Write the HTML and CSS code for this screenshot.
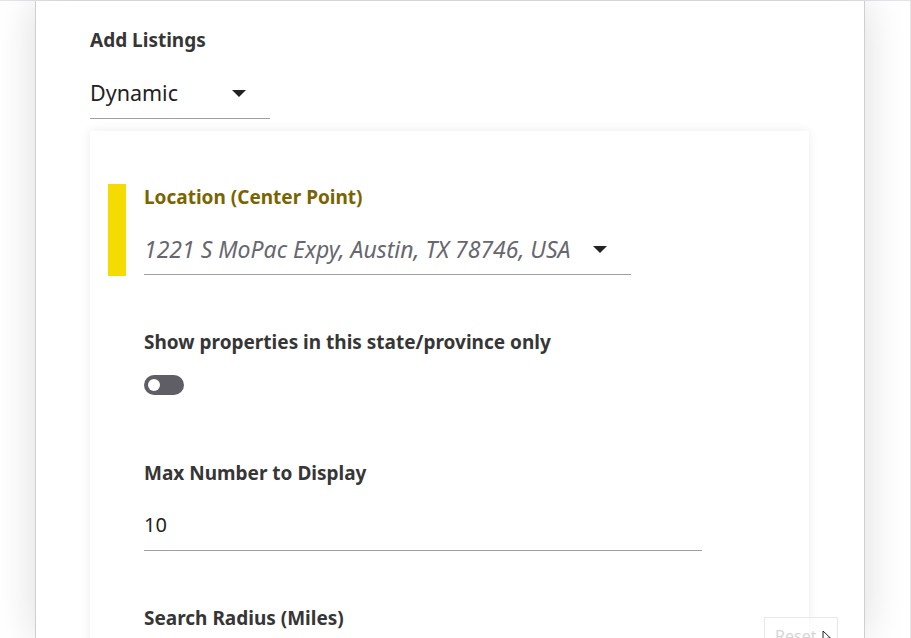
FILE: index.html
```html
<!DOCTYPE html>
<html>
<head>
<meta charset="utf-8">
<link rel="stylesheet" href="styles.css">
</head>
<body>
<div class="wrap">
  <div class="panel">
    <div class="title">Add Listings</div>
    <div class="select select-type">
      <span class="value">Dynamic</span>
      <svg class="caret" width="14" height="7" viewBox="0 0 14 7"><path d="M0 0H14L7 7Z" fill="#222"/></svg>
    </div>
    <div class="card">
      <div class="field field-active">
        <div class="bar"></div>
        <div class="label label-active">Location (Center Point)</div>
        <div class="select select-loc">
          <span class="value value-italic">1221 S MoPac Expy, Austin, TX 78746, USA</span>
          <svg class="caret" width="14" height="7" viewBox="0 0 14 7"><path d="M0 0H14L7 7Z" fill="#222"/></svg>
        </div>
      </div>
      <div class="field field-toggle">
        <div class="label">Show properties in this state/province only</div>
        <div class="toggle"><span class="knob"></span></div>
      </div>
      <div class="field field-max">
        <div class="label">Max Number to Display</div>
        <div class="input input-max"><span class="value-num">10</span></div>
      </div>
      <div class="field field-radius">
        <div class="label">Search Radius (Miles)</div>
      </div>
    </div>
  </div>
</div>
<div class="float-btn"><span>Reset</span></div>
<svg class="cursor" width="10" height="14" viewBox="0 0 10 14"><path d="M1 1V11L3.5 8.8L5.4 13L7 12.3L5.2 8.2H8.6Z" fill="#fff" stroke="#222" stroke-width="1"/></svg>
</body>
</html>
```
FILE: styles.css
```css
html, body {
  margin: 0;
  padding: 0;
  height: 100%;
  overflow: hidden;
  background: #ffffff;
  font-family: "Noto Sans", "Open Sans", sans-serif;
}
.wrap {
  box-sizing: border-box;
  height: 638px;
  border-top: 1px solid #e2e5e9;
  border-right: 1px solid #e4e4e4;
  padding-left: 35px;
  display: flex;
}
.panel {
  box-sizing: border-box;
  width: 830px;
  height: 637px;
  background: #fff;
  border-left: 1px solid #cfcfcf;
  border-right: 1px solid #cfcfcf;
  box-shadow: 0 0 40px rgba(0, 0, 0, 0.14);
  padding: 27px 54px 0 54px;
  overflow: hidden;
}
.title {
  font-size: 19px;
  line-height: 24px;
  font-weight: 700;
  color: #363636;
}
.select {
  display: flex;
  align-items: center;
  justify-content: space-between;
  border-bottom: 1px solid #9e9ea6;
}
.select-type {
  margin-top: 26px;
  width: 180px;
  height: 41px;
  box-sizing: border-box;
  padding: 0 24px 10px 0;
}
.value {
  font-size: 21.5px;
  line-height: 30px;
  color: #222;
}
.card {
  margin-top: 12px;
  width: 719px;
  min-height: 520px;
  background: #fff;
  box-shadow: 0 0 10px rgba(0, 0, 0, 0.08);
  padding: 54px 0 0 54px;
  box-sizing: border-box;
}
.field {
  position: relative;
}
.bar {
  position: absolute;
  left: -36px;
  top: -1px;
  width: 18px;
  height: 92px;
  background: #f5dc00;
}
.label {
  font-size: 19px;
  line-height: 24px;
  font-weight: 700;
  color: #363636;
}
.label-active {
  color: #7a6400;
}
.select-loc {
  margin-top: 24px;
  width: 487px;
  box-sizing: border-box;
  height: 42px;
  padding: 0 24px 9px 0;
}
.value-italic {
  font-size: 23px;
  font-style: italic;
  color: #67676f;
}
.field-toggle {
  margin-top: 55px;
}
.toggle {
  margin-top: 21px;
  width: 40px;
  height: 20px;
  border-radius: 10px;
  background: #5f5e66;
  display: flex;
  align-items: center;
  padding-left: 4px;
  box-sizing: border-box;
}
.knob {
  width: 12px;
  height: 12px;
  border-radius: 50%;
  background: #fff;
}
.field-max {
  margin-top: 66px;
}
.input {
  border-bottom: 1px solid #9e9ea6;
  box-sizing: border-box;
}
.input-max {
  margin-top: 25px;
  width: 558px;
  height: 41px;
  padding-bottom: 11px;
}
.value-num {
  font-size: 20px;
  line-height: 30px;
  color: #222;
}
.field-radius {
  margin-top: 55px;
}
.float-btn {
  position: absolute;
  left: 764px;
  top: 617px;
  width: 74px;
  height: 30px;
  box-sizing: border-box;
  border: 1px solid #e8e8e8;
  background: rgba(255, 255, 255, 0.6);
  padding: 8px 0 0 10px;
  font-size: 16px;
  color: #d6d6d6;
  line-height: 20px;
}
.cursor {
  position: absolute;
  left: 822px;
  top: 630px;
}
```
